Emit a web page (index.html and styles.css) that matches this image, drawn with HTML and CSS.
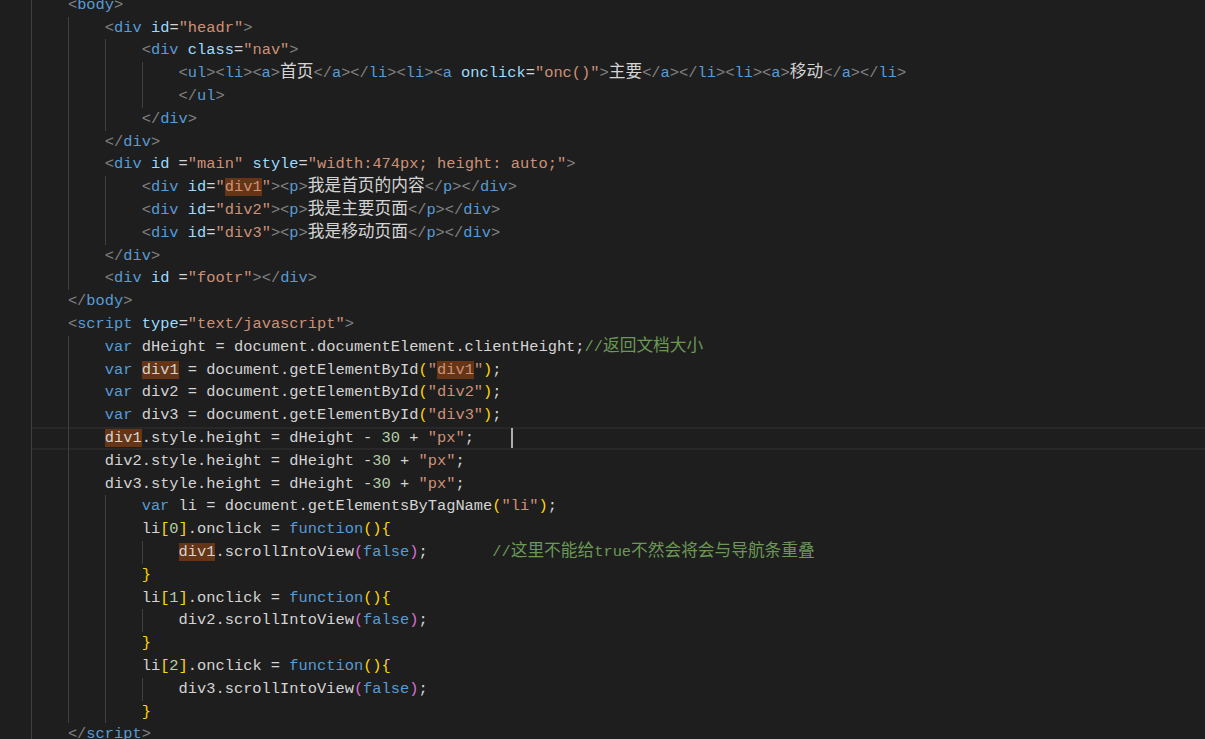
FILE: index.html
```html
<!DOCTYPE html>
<html>
<head>
<meta charset="utf-8">
<link rel="stylesheet" href="styles.css">
</head>
<body>
<div class="editor">
<div class="lines">
<div class="line"><span class="g"></span><span class="p">&lt;</span><span class="t">body</span><span class="p">&gt;</span></div>
<div class="line"><span class="g"></span><span class="g"></span><span class="p">&lt;</span><span class="t">div</span> <span class="a">id</span>=<span class="s">"headr"</span><span class="p">&gt;</span></div>
<div class="line"><span class="g"></span><span class="g"></span><span class="g"></span><span class="p">&lt;</span><span class="t">div</span> <span class="a">class</span>=<span class="s">"nav"</span><span class="p">&gt;</span></div>
<div class="line"><span class="g"></span><span class="g"></span><span class="g"></span><span class="g"></span><span class="p">&lt;</span><span class="t">ul</span><span class="p">&gt;&lt;</span><span class="t">li</span><span class="p">&gt;&lt;</span><span class="t">a</span><span class="p">&gt;</span><span class="z">首页</span><span class="p">&lt;/</span><span class="t">a</span><span class="p">&gt;&lt;/</span><span class="t">li</span><span class="p">&gt;&lt;</span><span class="t">li</span><span class="p">&gt;&lt;</span><span class="t">a</span> <span class="a">onclick</span>=<span class="s">"onc()"</span><span class="p">&gt;</span><span class="z">主要</span><span class="p">&lt;/</span><span class="t">a</span><span class="p">&gt;&lt;/</span><span class="t">li</span><span class="p">&gt;&lt;</span><span class="t">li</span><span class="p">&gt;&lt;</span><span class="t">a</span><span class="p">&gt;</span><span class="z">移动</span><span class="p">&lt;/</span><span class="t">a</span><span class="p">&gt;&lt;/</span><span class="t">li</span><span class="p">&gt;</span></div>
<div class="line"><span class="g"></span><span class="g"></span><span class="g"></span><span class="g"></span><span class="p">&lt;/</span><span class="t">ul</span><span class="p">&gt;</span></div>
<div class="line"><span class="g"></span><span class="g"></span><span class="g"></span><span class="p">&lt;/</span><span class="t">div</span><span class="p">&gt;</span></div>
<div class="line"><span class="g"></span><span class="g"></span><span class="p">&lt;/</span><span class="t">div</span><span class="p">&gt;</span></div>
<div class="line"><span class="g"></span><span class="g"></span><span class="p">&lt;</span><span class="t">div</span> <span class="a">id</span> =<span class="s">"main"</span> <span class="a">style</span>=<span class="s">"width:474px; height: auto;"</span><span class="p">&gt;</span></div>
<div class="line"><span class="g"></span><span class="g"></span><span class="g"></span><span class="p">&lt;</span><span class="t">div</span> <span class="a">id</span>=<span class="s">"<span class="h">div1</span>"</span><span class="p">&gt;&lt;</span><span class="t">p</span><span class="p">&gt;</span><span class="z">我是首页的内容</span><span class="p">&lt;/</span><span class="t">p</span><span class="p">&gt;&lt;/</span><span class="t">div</span><span class="p">&gt;</span></div>
<div class="line"><span class="g"></span><span class="g"></span><span class="g"></span><span class="p">&lt;</span><span class="t">div</span> <span class="a">id</span>=<span class="s">"div2"</span><span class="p">&gt;&lt;</span><span class="t">p</span><span class="p">&gt;</span><span class="z">我是主要页面</span><span class="p">&lt;/</span><span class="t">p</span><span class="p">&gt;&lt;/</span><span class="t">div</span><span class="p">&gt;</span></div>
<div class="line"><span class="g"></span><span class="g"></span><span class="g"></span><span class="p">&lt;</span><span class="t">div</span> <span class="a">id</span>=<span class="s">"div3"</span><span class="p">&gt;&lt;</span><span class="t">p</span><span class="p">&gt;</span><span class="z">我是移动页面</span><span class="p">&lt;/</span><span class="t">p</span><span class="p">&gt;&lt;/</span><span class="t">div</span><span class="p">&gt;</span></div>
<div class="line"><span class="g"></span><span class="g"></span><span class="p">&lt;/</span><span class="t">div</span><span class="p">&gt;</span></div>
<div class="line"><span class="g"></span><span class="g"></span><span class="p">&lt;</span><span class="t">div</span> <span class="a">id</span> =<span class="s">"footr"</span><span class="p">&gt;&lt;/</span><span class="t">div</span><span class="p">&gt;</span></div>
<div class="line"><span class="g"></span><span class="p">&lt;/</span><span class="t">body</span><span class="p">&gt;</span></div>
<div class="line"><span class="g"></span><span class="p">&lt;</span><span class="t">script</span> <span class="a">type</span>=<span class="s">"text/javascript"</span><span class="p">&gt;</span></div>
<div class="line"><span class="g"></span><span class="g"></span><span class="k">var</span> dHeight = document.documentElement.clientHeight;<span class="c">//<span class="z">返回文档大小</span></span></div>
<div class="line"><span class="g"></span><span class="g"></span><span class="k">var</span> <span class="h">div1</span> = document.getElementById<span class="b1">(</span><span class="s">"<span class="h">div1</span>"</span><span class="b1">)</span>;</div>
<div class="line"><span class="g"></span><span class="g"></span><span class="k">var</span> div2 = document.getElementById<span class="b1">(</span><span class="s">"div2"</span><span class="b1">)</span>;</div>
<div class="line"><span class="g"></span><span class="g"></span><span class="k">var</span> div3 = document.getElementById<span class="b1">(</span><span class="s">"div3"</span><span class="b1">)</span>;</div>
<div class="line current"><span class="g"></span><span class="g"></span><span class="h">div1</span>.style.height = dHeight - <span class="n">30</span> + <span class="s">"px"</span>;    <span class="cursor"></span></div>
<div class="line"><span class="g"></span><span class="g"></span>div2.style.height = dHeight -<span class="n">30</span> + <span class="s">"px"</span>;</div>
<div class="line"><span class="g"></span><span class="g"></span>div3.style.height = dHeight -<span class="n">30</span> + <span class="s">"px"</span>;</div>
<div class="line"><span class="g"></span><span class="g"></span><span class="g"></span><span class="k">var</span> li = document.getElementsByTagName<span class="b1">(</span><span class="s">"li"</span><span class="b1">)</span>;</div>
<div class="line"><span class="g"></span><span class="g"></span><span class="g"></span>li<span class="b1">[</span><span class="n">0</span><span class="b1">]</span>.onclick = <span class="k">function</span><span class="b1">(){</span></div>
<div class="line"><span class="g"></span><span class="g"></span><span class="g"></span><span class="g"></span><span class="h">div1</span>.scrollIntoView<span class="b2">(</span><span class="k">false</span><span class="b2">)</span>;       <span class="c">//<span class="z">这里不能给</span>true<span class="z">不然会将会与导航条重叠</span></span></div>
<div class="line"><span class="g"></span><span class="g"></span><span class="g"></span><span class="b1">}</span></div>
<div class="line"><span class="g"></span><span class="g"></span><span class="g"></span>li<span class="b1">[</span><span class="n">1</span><span class="b1">]</span>.onclick = <span class="k">function</span><span class="b1">(){</span></div>
<div class="line"><span class="g"></span><span class="g"></span><span class="g"></span><span class="g"></span>div2.scrollIntoView<span class="b2">(</span><span class="k">false</span><span class="b2">)</span>;</div>
<div class="line"><span class="g"></span><span class="g"></span><span class="g"></span><span class="b1">}</span></div>
<div class="line"><span class="g"></span><span class="g"></span><span class="g"></span>li<span class="b1">[</span><span class="n">2</span><span class="b1">]</span>.onclick = <span class="k">function</span><span class="b1">(){</span></div>
<div class="line"><span class="g"></span><span class="g"></span><span class="g"></span><span class="g"></span>div3.scrollIntoView<span class="b2">(</span><span class="k">false</span><span class="b2">)</span>;</div>
<div class="line"><span class="g"></span><span class="g"></span><span class="g"></span><span class="b1">}</span></div>
<div class="line"><span class="g"></span><span class="p">&lt;/</span><span class="t">script</span><span class="p">&gt;</span></div>
</div>
</div>
</body>
</html>
```

FILE: styles.css
```css
html, body {
  margin: 0;
  padding: 0;
  background: #1e1e1e;
  overflow: hidden;
}

.editor {
  width: 1205px;
  height: 739px;
  overflow: hidden;
  background: #1e1e1e;
  padding-left: 31px;
  box-sizing: border-box;
}

.lines {
  margin-top: -6.2px;
  font-family: "Liberation Mono", "DejaVu Sans Mono", monospace;
  font-size: 15.38px;
  line-height: 22.8px;
  color: #d4d4d4;
}

.line {
  height: 22.8px;
  white-space: pre;
}

.line.current {
  box-shadow: inset 0 2px 0 #282828, inset 0 -2px 0 #282828;
}

.g {
  display: inline-block;
  width: 4ch;
  height: 22.8px;
  vertical-align: top;
  border-left: 1px solid #404040;
  box-sizing: border-box;
}

.p { color: #808080; }
.t { color: #569cd6; }
.a { color: #9cdcfe; }
.s { color: #ce9178; }
.k { color: #569cd6; }
.n { color: #b5cea8; }
.c { color: #6a9955; }
.b1 { color: #ffd700; }
.b2 { color: #da70d6; }

.h {
  background: #653515;
}

.z {
  font-family: "Noto Sans CJK SC", sans-serif;
  font-size: 16.7px;
  line-height: 1;
}

.cursor {
  display: inline-block;
  width: 2px;
  height: 20px;
  background: #aeafad;
  vertical-align: top;
  margin-top: 1px;
}
```
